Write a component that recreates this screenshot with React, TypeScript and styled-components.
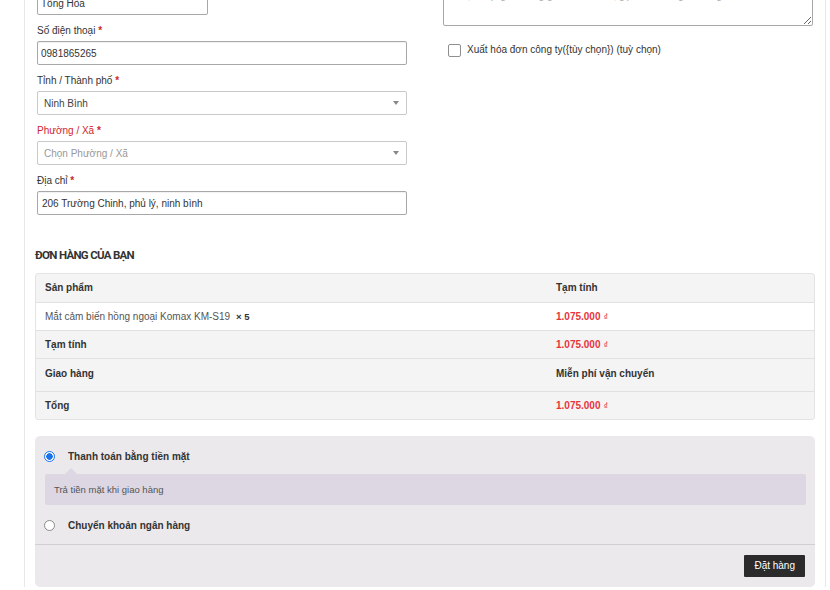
import React from "react";
import styled, { createGlobalStyle } from "styled-components";

const GlobalStyle = createGlobalStyle`
  body {
    margin: 0;
    background: #fff;
    font-family: "Liberation Sans", Arial, sans-serif;
    color: #333;
    overflow: hidden;
  }
`;

const Page = styled.div`
  margin-left: 24px;
  width: 802px;
  min-height: 600px;
  border-left: 1px solid #e8e8e8;
  border-right: 1px solid #e8e8e8;
  padding: 0 10px;
  box-sizing: border-box;
`;

const Columns = styled.div`
  display: grid;
  grid-template-columns: 370px 370px;
  column-gap: 36px;
  padding: 0 2px;
  margin-top: -26px;
  align-items: start;
`;

const Column = styled.div`
  display: flex;
  flex-direction: column;
`;

const Field = styled.div<{ $first?: boolean }>`
  display: flex;
  flex-direction: column;
  margin-top: ${(p) => (p.$first ? "0" : "9px")};
`;

const Label = styled.label<{ $error?: boolean }>`
  font-size: 10px;
  line-height: 14px;
  margin-bottom: 3px;
  color: ${(p) => (p.$error ? "#d0262c" : "#333")};
`;

const Req = styled.span`
  color: #d0262c;
  font-weight: 700;
`;

const TextInput = styled.input<{ $w?: number; $pad?: number }>`
  box-sizing: border-box;
  width: ${(p) => (p.$w ? `${p.$w}px` : "100%")};
  height: 24px;
  border: 1px solid #a8a8a8;
  border-radius: 2px;
  padding: 0 ${(p) => p.$pad ?? 3}px;
  font-family: "Liberation Sans", Arial, sans-serif;
  font-size: 10px;
  color: #333;
  background: #fff;
  box-shadow: inset 0 1px 1px rgba(0, 0, 0, 0.06);
  outline: none;
`;

const Select = styled.div<{ $placeholder?: boolean }>`
  box-sizing: border-box;
  height: 24px;
  border: 1px solid #c9c9c9;
  border-radius: 2px;
  padding: 0 6px;
  display: flex;
  align-items: center;
  justify-content: space-between;
  font-size: 10px;
  color: ${(p) => (p.$placeholder ? "#999" : "#444")};
  background: #fff;
`;

const Caret = styled.span`
  width: 0;
  height: 0;
  border-left: 3px solid transparent;
  border-right: 3px solid transparent;
  border-top: 4px solid #888;
  margin-right: 1px;
`;

const TextArea = styled.textarea`
  box-sizing: border-box;
  width: 100%;
  height: 52px;
  border: 1px solid #a8a8a8;
  border-radius: 2px;
  padding: 0 6px;
  font-family: "Liberation Sans", Arial, sans-serif;
  font-size: 10px;
  line-height: 14px;
  color: #333;
  resize: vertical;
  outline: none;
  &::placeholder {
    color: #aaa;
  }
`;

const CheckRow = styled.label`
  display: flex;
  align-items: center;
  gap: 6px;
  margin-top: 17px;
  padding-left: 5px;
  font-size: 10px;
  line-height: 14px;
  color: #333;
`;

const CheckBox = styled.span`
  box-sizing: border-box;
  width: 13px;
  height: 13px;
  border: 1px solid #8f8f8f;
  border-radius: 2px;
  background: #fff;
`;

const Heading = styled.h3`
  margin: 33px 0 11px;
  font-family: "Roboto", "Liberation Sans", sans-serif;
  font-size: 11.5px;
  line-height: 14px;
  font-weight: 700;
  letter-spacing: -0.7px;
  text-transform: uppercase;
  color: #333;
`;

const Table = styled.div`
  border: 1px solid #e4e4e4;
  border-radius: 3px;
  overflow: hidden;
  background: #f4f4f4;
`;

const Row = styled.div<{ $white?: boolean; $h?: number }>`
  display: grid;
  grid-template-columns: 511px 1fr;
  height: ${(p) => p.$h ?? 28}px;
  box-sizing: border-box;
  background: ${(p) => (p.$white ? "#fff" : "transparent")};
  & + & {
    border-top: 1px solid #e1e1e1;
  }
`;

const Cell = styled.div<{ $bold?: boolean; $top?: boolean }>`
  padding: 0 9px;
  display: flex;
  align-items: ${(p) => (p.$top ? "flex-start" : "center")};
  padding-top: ${(p) => (p.$top ? "8px" : "0")};
  font-size: 10px;
  line-height: 14px;
  font-weight: ${(p) => (p.$bold ? 700 : 400)};
  color: ${(p) => (p.$bold ? "#333" : "#555")};
`;

const Qty = styled.strong`
  margin-left: 6px;
  font-size: 9.5px;
  color: #333;
`;

const Price = styled.span`
  color: #e8343c;
  font-weight: 700;
  font-size: 10px;
`;

const Dong = styled.span`
  font-size: 9px;
  margin-left: 3px;
  font-weight: 400;
`;

const Payment = styled.div`
  margin-top: 16px;
  background: #ebe9eb;
  border-radius: 5px;
`;

const Methods = styled.ul`
  list-style: none;
  margin: 0;
  padding: 11px 9px 10px;
  border-bottom: 1px solid #d3ced2;
`;

const Method = styled.li<{ $gap?: number }>`
  margin-top: ${(p) => p.$gap ?? 0}px;
`;

const MethodHead = styled.div`
  display: flex;
  align-items: center;
  height: 18px;
`;

const Radio = styled.span<{ $checked?: boolean }>`
  box-sizing: border-box;
  width: 11px;
  height: 11px;
  border-radius: 50%;
  border: ${(p) => (p.$checked ? "1px solid #1a73e8" : "1px solid #8a8a8a")};
  background: ${(p) =>
    p.$checked
      ? "radial-gradient(circle, #1a73e8 0 3px, #fff 3.5px)"
      : "#fff"};
`;

const MethodLabel = styled.span`
  margin-left: 13px;
  font-size: 10px;
  font-weight: 700;
  color: #333;
`;

const MethodBox = styled.div`
  position: relative;
  margin: 9px 0 0 1px;
  height: 31px;
  background: #dcd7e3;
  border-radius: 2px;
  padding: 0 9px;
  display: flex;
  align-items: center;
  font-size: 9.5px;
  color: #555;
  &::before {
    content: "";
    position: absolute;
    top: -6px;
    left: 20px;
    border-left: 6px solid transparent;
    border-right: 6px solid transparent;
    border-bottom: 6px solid #dcd7e3;
  }
`;

const PlaceOrder = styled.div`
  display: flex;
  justify-content: flex-end;
  padding: 10px;
`;

const Button = styled.button`
  height: 22px;
  padding: 0 10px;
  border: none;
  border-radius: 1px;
  background: #2b2b2b;
  color: #fff;
  font-family: "Liberation Sans", Arial, sans-serif;
  font-size: 10px;
  line-height: 22px;
`;

const Price1 = () => (
  <Price>
    1.075.000<Dong>₫</Dong>
  </Price>
);

export default function App() {
  return (
    <>
      <GlobalStyle />
      <Page>
        <Columns>
          <Column>
            <Field $first>
              <Label>
                Tên <Req>*</Req>
              </Label>
              <TextInput $w={171} defaultValue="Tổng Hòa" readOnly />
            </Field>
            <Field>
              <Label>
                Số điện thoại <Req>*</Req>
              </Label>
              <TextInput defaultValue="0981865265" readOnly />
            </Field>
            <Field>
              <Label>
                Tỉnh / Thành phố <Req>*</Req>
              </Label>
              <Select>
                Ninh Bình
                <Caret />
              </Select>
            </Field>
            <Field>
              <Label $error>
                Phường / Xã <Req>*</Req>
              </Label>
              <Select $placeholder>
                Chọn Phường / Xã
                <Caret />
              </Select>
            </Field>
            <Field>
              <Label>
                Địa chỉ <Req>*</Req>
              </Label>
              <TextInput $pad={4} defaultValue="206 Trường Chinh, phủ lý, ninh bình" readOnly />
            </Field>
          </Column>
          <Column>
            <TextArea placeholder="Ghi chú về đơn hàng, ví dụ: thời gian hay chỉ dẫn địa điểm giao hàng chi tiết hơn, ví dụ: giao hàng giờ hành chính, gọi trước khi giao hàng." />
            <CheckRow>
              <CheckBox />
              Xuất hóa đơn công ty({"{"}tùy chọn{"}"}) (tuỳ chọn)
            </CheckRow>
          </Column>
        </Columns>

        <Heading>Đơn hàng của bạn</Heading>
        <Table>
          <Row>
            <Cell $bold>Sản phẩm</Cell>
            <Cell $bold>Tạm tính</Cell>
          </Row>
          <Row $white>
            <Cell>
              Mắt cảm biến hồng ngoại Komax KM-S19 <Qty>× 5</Qty>
            </Cell>
            <Cell>
              <Price1 />
            </Cell>
          </Row>
          <Row>
            <Cell $bold>Tạm tính</Cell>
            <Cell>
              <Price1 />
            </Cell>
          </Row>
          <Row $h={33}>
            <Cell $bold $top>
              Giao hàng
            </Cell>
            <Cell $bold $top>
              Miễn phí vận chuyển
            </Cell>
          </Row>
          <Row>
            <Cell $bold>Tổng</Cell>
            <Cell>
              <Price1 />
            </Cell>
          </Row>
        </Table>

        <Payment>
          <Methods>
            <Method>
              <MethodHead>
                <Radio $checked />
                <MethodLabel>Thanh toán bằng tiền mặt</MethodLabel>
              </MethodHead>
              <MethodBox>Trả tiền mặt khi giao hàng</MethodBox>
            </Method>
            <Method $gap={11}>
              <MethodHead>
                <Radio />
                <MethodLabel>Chuyển khoản ngân hàng</MethodLabel>
              </MethodHead>
            </Method>
          </Methods>
          <PlaceOrder>
            <Button>Đặt hàng</Button>
          </PlaceOrder>
        </Payment>
      </Page>
    </>
  );
}
